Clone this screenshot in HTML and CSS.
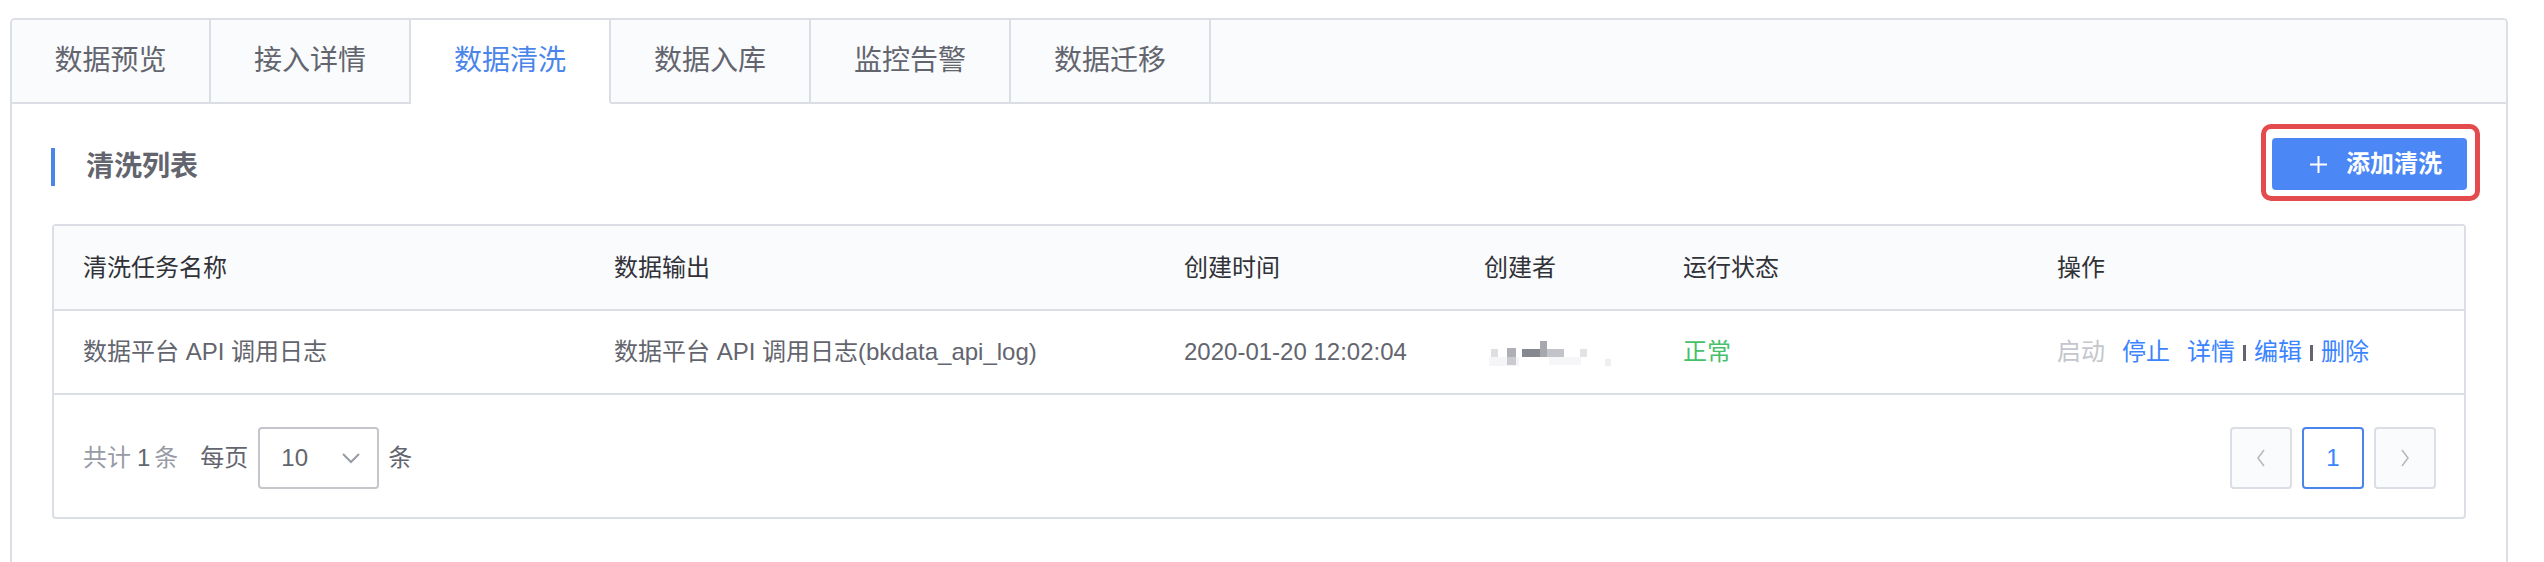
FILE: index.html
```html
<!DOCTYPE html>
<html lang="zh-CN">
<head>
<meta charset="utf-8">
<title>数据清洗</title>
<link rel="stylesheet" href="styles.css">
</head>
<body>
<div class="panel">
  <div class="tabs">
    <div class="tab">数据预览</div>
    <div class="tab">接入详情</div>
    <div class="tab active">数据清洗</div>
    <div class="tab">数据入库</div>
    <div class="tab">监控告警</div>
    <div class="tab">数据迁移</div>
    <div class="tab-fill"></div>
  </div>
  <div class="content">
    <div class="section-head">
      <h2 class="section-title">清洗列表</h2>
      <div class="btn-wrap">
        <button class="btn-primary" type="button">
          <svg class="plus" width="17" height="17" viewBox="0 0 17 17"><path d="M8.5 0v17M0 8.5h17" stroke="#fff" stroke-width="2"/></svg>
          <span>添加清洗</span>
        </button>
        <span class="highlight"></span>
      </div>
    </div>

    <div class="table">
      <div class="row head">
        <div class="cell">清洗任务名称</div>
        <div class="cell">数据输出</div>
        <div class="cell">创建时间</div>
        <div class="cell">创建者</div>
        <div class="cell">运行状态</div>
        <div class="cell">操作</div>
      </div>
      <div class="row body">
        <div class="cell">数据平台 API 调用日志</div>
        <div class="cell">数据平台 API 调用日志(bkdata_api_log)</div>
        <div class="cell">2020-01-20 12:02:04</div>
        <div class="cell">
          <svg class="mosaic" width="124" height="26" viewBox="0 0 124 26">
            <rect x="0" y="16" width="30" height="9" fill="#f5f5f7"/>
            <rect x="60" y="16" width="32" height="8" fill="#f6f6f8"/>
            <rect x="2" y="8" width="7" height="8" fill="#dedfe3"/>
            <rect x="18" y="7" width="9" height="17" fill="#c9cbd0"/>
            <rect x="18" y="7" width="9" height="9" fill="#aeb0b6"/>
            <rect x="33" y="8" width="18" height="8" fill="#85888f"/>
            <rect x="51" y="0" width="7" height="16" fill="#a6a8ae"/>
            <rect x="58" y="8" width="17" height="8" fill="#c2c4c9"/>
            <rect x="91" y="8" width="7" height="8" fill="#e2e3e6"/>
            <rect x="116" y="18" width="6" height="7" fill="#eeeff1"/>
          </svg>
        </div>
        <div class="cell status-ok">正常</div>
        <div class="cell ops">
          <span class="op disabled">启动</span>
          <span class="op link">停止</span>
          <span class="link">详情</span><span class="sep"></span><span class="link">编辑</span><span class="sep"></span><span class="link">删除</span>
        </div>
      </div>
      <div class="footer">
        <div class="page-info">
          <span class="muted">共计</span><span class="count">1</span><span class="muted">条</span>
          <span class="per">每页</span>
          <div class="select">
            <span>10</span>
            <svg class="chev" width="18" height="11" viewBox="0 0 18 11"><path d="M1 1l8 8 8-8" fill="none" stroke="#979ba5" stroke-width="2"/></svg>
          </div>
          <span class="unit">条</span>
        </div>
        <div class="pager">
          <div class="pg">
            <svg width="10" height="18" viewBox="0 0 10 18"><path d="M8 1L2 9l6 8" fill="none" stroke="#b8bac0" stroke-width="1.6"/></svg>
          </div>
          <div class="pg current">1</div>
          <div class="pg">
            <svg width="10" height="18" viewBox="0 0 10 18"><path d="M2 1l6 8-6 8" fill="none" stroke="#b8bac0" stroke-width="1.6"/></svg>
          </div>
        </div>
      </div>
    </div>
  </div>
</div>
</body>
</html>
```

FILE: styles.css
```css
html, body {
  margin: 0;
  padding: 0;
  background: #ffffff;
  overflow: hidden;
}

body {
  font-family: "Liberation Sans", "Noto Sans CJK SC", sans-serif;
  color: #63656e;
}

.panel {
  margin: 18px 0 0 10px;
  width: 2498px;
  height: calc(100vh - 18px);
  box-sizing: border-box;
  border: 2px solid #dcdee5;
  border-bottom: none;
  border-radius: 5px 5px 0 0;
  overflow: hidden;
}

/* Tabs */
.tabs {
  display: flex;
  height: 84px;
  background: #fafbfd;
}

.tab {
  width: 200px;
  box-sizing: border-box;
  border-right: 2px solid #dcdee5;
  border-bottom: 2px solid #dcdee5;
  display: flex;
  align-items: center;
  justify-content: center;
  font-size: 28px;
  line-height: 28px;
  color: #63656e;
}

.tab:first-child {
  width: 199px;
}

.tab.active {
  background: #ffffff;
  color: #4a86ea;
  border-bottom-color: #ffffff;
}

.tab-fill {
  flex: 1;
  border-bottom: 2px solid #dcdee5;
}

/* Content */
.content {
  padding: 0 40px;
}

.section-head {
  display: flex;
  justify-content: space-between;
  align-items: flex-start;
  margin-top: 34px;
}

.section-title {
  margin: 10px 0 0 -1px;
  height: 38px;
  border-left: 4px solid #4a86ea;
  padding-left: 31px;
  font-size: 28px;
  line-height: 38px;
  font-weight: 700;
  color: #63656e;
}

.btn-wrap {
  position: relative;
  margin-right: -1px;
}

.btn-primary {
  display: flex;
  align-items: center;
  width: 195px;
  height: 52px;
  box-sizing: border-box;
  padding: 0 0 0 38px;
  border: none;
  border-radius: 4px;
  background: #4c87f6;
  color: #ffffff;
  font-family: "Liberation Sans", "Noto Sans CJK SC", sans-serif;
  font-size: 24px;
  font-weight: 700;
  line-height: 24px;
}

.btn-primary .plus {
  margin-right: 19px;
}

.highlight {
  position: absolute;
  left: -11px;
  top: -14px;
  right: -13px;
  bottom: -11px;
  border: 5px solid #e34b4d;
  border-radius: 10px;
}

/* Table */
.table {
  margin-top: 34px;
  border: 2px solid #dcdee5;
  border-radius: 4px;
}

.row {
  display: grid;
  grid-template-columns: 531px 570px 300px 199px 374px 1fr;
  border-bottom: 2px solid #dcdee5;
  box-sizing: border-box;
}

.row.head {
  height: 85px;
  background: #fafbfd;
  color: #313238;
}

.row.body {
  height: 84px;
  color: #63656e;
}

.cell {
  display: flex;
  align-items: center;
  padding-left: 29px;
  font-size: 24px;
  line-height: 24px;
  white-space: nowrap;
}

.mosaic {
  margin: 4px 0 0 5px;
}

.status-ok {
  color: #45c16a;
}

.op {
  margin-right: 17px;
}

.disabled {
  color: #c4c6cc;
}

.link {
  color: #3a84ff;
}

.sep {
  width: 3px;
  height: 16px;
  margin: 2px 8px 0 8px;
  background: #63656e;
}

/* Footer */
.footer {
  height: 122px;
  box-sizing: border-box;
  padding: 4px 28px 0 29px;
  display: flex;
  align-items: center;
  justify-content: space-between;
}

.page-info {
  display: flex;
  align-items: center;
  font-size: 24px;
  line-height: 24px;
}

.muted {
  color: #979ba5;
}

.count {
  color: #63656e;
  margin: 0 4px 0 6px;
}

.per {
  margin-left: 22px;
  color: #63656e;
}

.select {
  margin-left: 10px;
  width: 121px;
  height: 62px;
  box-sizing: border-box;
  border: 2px solid #c4c6cc;
  border-radius: 4px;
  display: flex;
  align-items: center;
  justify-content: space-between;
  padding: 0 17px 0 21px;
  color: #63656e;
}

.unit {
  margin-left: 9px;
  color: #63656e;
}

.pager {
  display: flex;
  gap: 10px;
}

.pg {
  width: 62px;
  height: 62px;
  box-sizing: border-box;
  border: 2px solid #dcdee5;
  border-radius: 4px;
  background: #fafbfd;
  display: flex;
  align-items: center;
  justify-content: center;
  font-size: 24px;
  color: #63656e;
}

.pg.current {
  background: #ffffff;
  border-color: #4a86ea;
  color: #3a84ff;
}
```
